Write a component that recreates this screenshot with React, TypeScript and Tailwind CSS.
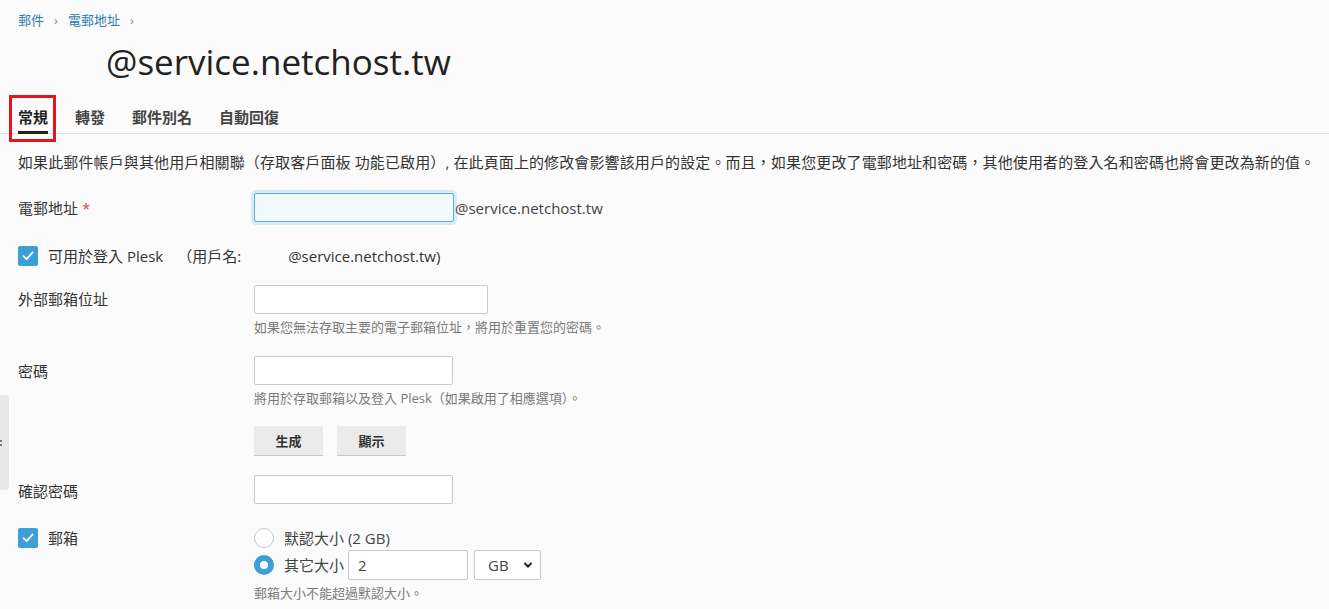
import React from 'react';

const font = { fontFamily: '"Open Sans", "Noto Sans CJK TC", sans-serif' };

const Check: React.FC = () => (
  <span className="w-5 h-5 rounded-[2px] bg-[#3d9fd7] flex items-center justify-center shrink-0">
    <svg width="14" height="14" viewBox="0 0 14 14" fill="none">
      <path d="M2.5 7.2 L5.6 10.2 L11.6 3.4" stroke="white" strokeWidth="1.8" strokeLinecap="round" strokeLinejoin="round" />
    </svg>
  </span>
);

const TextBox: React.FC<{ w: string; focus?: boolean }> = ({ w, focus }) => (
  <div
    className={`${w} h-[29px] rounded-[2px] border ${
      focus ? 'border-[#5aaed6] bg-[#f2f9fd] shadow-[0_0_0_3px_#d6ebf7]' : 'border-[#c9c9c9] bg-white'
    }`}
  />
);

const Hint: React.FC<{ children: React.ReactNode }> = ({ children }) => (
  <div className="text-[13px] text-[#7a7a7a] mt-[5px] leading-[17px]">{children}</div>
);

const App: React.FC = () => {
  const tabs = ['常規', '轉發', '郵件別名', '自動回復'];

  return (
    <div className="relative w-[1329px] h-[609px] bg-[#fbfbfb] text-[#333] overflow-hidden" style={font}>
      {/* side handle */}
      <div className="absolute left-0 top-[395px] w-[9px] h-[95px] bg-[#e8e8e8] rounded-r-[4px] flex items-center">
        <div className="flex flex-col gap-[2px]">
          <span className="w-[2px] h-[2px] bg-[#777]" />
          <span className="w-[2px] h-[2px] bg-[#777]" />
        </div>
      </div>

      {/* breadcrumb */}
      <div className="flex items-center gap-[10px] pl-[18px] pt-[11px] text-[13px] leading-[18px] text-[#2f7bab]">
        <span>郵件</span>
        <span className="text-[#888]">›</span>
        <span>電郵地址</span>
        <span className="text-[#888]">›</span>
      </div>

      {/* title */}
      <h1 className="pl-[106px] mt-[13px] text-[35px] leading-[40px] text-[#222] font-normal">@service.netchost.tw</h1>

      {/* tabs */}
      <div className="mt-[19px] border-b border-[#e2e2e2] h-[33px] flex gap-[27px] pl-[18px] relative">
        {tabs.map((t, i) => (
          <div
            key={t}
            className={`relative text-[15px] leading-[20px] pt-[6px] font-semibold ${i === 0 ? 'text-[#222]' : 'text-[#444]'}`}
          >
            {t}
            {i === 0 && <div className="absolute left-0 right-0 bottom-[-1px] h-[3px] bg-[#222]" />}
            {i === 0 && <div className="absolute left-[-9px] top-[-6px] w-[47px] h-[47px] border-[3px] border-[#e8141b]" />}
          </div>
        ))}
      </div>

      {/* description */}
      <p className="pl-[18px] mt-[18px] text-[15px] leading-[20px] tracking-[0.12px] text-[#333] whitespace-nowrap">
        如果此郵件帳戶與其他用戶相關聯（存取客戶面板 功能已啟用）, 在此頁面上的修改會影響該用戶的設定。而且，如果您更改了電郵地址和密碼，其他使用者的登入名和密碼也將會更改為新的值。
      </p>

      <div className="pl-[18px] text-[15px] leading-[20px]">
        {/* email */}
        <div className="flex items-center mt-[21px]">
          <div className="w-[236px]">
            電郵地址 <span className="text-[#d0494c]">*</span>
          </div>
          <TextBox w="w-[200px]" focus />
          <span className="ml-[1px] text-[#444]">@service.netchost.tw</span>
        </div>

        {/* plesk login */}
        <div className="flex items-center mt-[24px]">
          <Check />
          <span className="ml-[10px]">可用於登入 Plesk</span>
          <span className="ml-[14px]">（用戶名:</span>
          <span className="ml-[47px]">@service.netchost.tw)</span>
        </div>

        {/* external mailbox */}
        <div className="flex mt-[19px]">
          <div className="w-[236px] pt-[4px]">外部郵箱位址</div>
          <div>
            <TextBox w="w-[234px]" />
            <Hint>如果您無法存取主要的電子郵箱位址，將用於重置您的密碼。</Hint>
          </div>
        </div>

        {/* password */}
        <div className="flex mt-[20px]">
          <div className="w-[236px] pt-[5px]">密碼</div>
          <div>
            <TextBox w="w-[199px]" />
            <Hint>將用於存取郵箱以及登入 Plesk（如果啟用了相應選項）。</Hint>
            <div className="flex gap-[14px] mt-[19px]">
              <button className="w-[69px] h-[29px] bg-[#ebebeb] shadow-[0_1px_0_#c8c8c8] text-[13px] font-semibold text-[#333]">
                生成
              </button>
              <button className="w-[69px] h-[29px] bg-[#ebebeb] shadow-[0_1px_0_#c8c8c8] text-[13px] font-semibold text-[#333]">
                顯示
              </button>
            </div>
          </div>
        </div>

        {/* confirm */}
        <div className="flex items-center mt-[20px]">
          <div className="w-[236px] pt-[2px]">確認密碼</div>
          <TextBox w="w-[199px]" />
        </div>

        {/* mailbox */}
        <div className="flex mt-[23px]">
          <div className="w-[236px] flex items-start pt-[1px]">
            <Check />
            <span className="ml-[10px]">郵箱</span>
          </div>
          <div>
            <div className="flex items-center h-[21px]">
              <span className="w-5 h-5 rounded-full border border-[#c6c6c6] bg-white" />
              <span className="ml-[10px] text-[#444]">默認大小 (2 GB)</span>
            </div>
            <div className="flex items-center mt-[2px]">
              <span className="w-5 h-5 rounded-full bg-[#3d9fd7] flex items-center justify-center">
                <span className="w-[8px] h-[8px] rounded-full bg-white" />
              </span>
              <span className="ml-[10px] text-[#444]">其它大小</span>
              <div className="ml-[4px] w-[120px] h-[30px] border border-[#c9c9c9] bg-white rounded-[2px] flex items-center pl-[9px] text-[#444]">
                2
              </div>
              <div className="ml-[6px] w-[67px] h-[30px] border border-[#c9c9c9] bg-white rounded-[2px] flex items-center justify-between pl-[13px] pr-[7px] text-[#444]">
                <span>GB</span>
                <svg width="10" height="8" viewBox="0 0 10 8">
                  <path d="M1.5 2 L5 5.5 L8.5 2" stroke="#222" strokeWidth="2" fill="none" />
                </svg>
              </div>
            </div>
            <Hint>郵箱大小不能超過默認大小。</Hint>
          </div>
        </div>
      </div>
    </div>
  );
};

export default App;
